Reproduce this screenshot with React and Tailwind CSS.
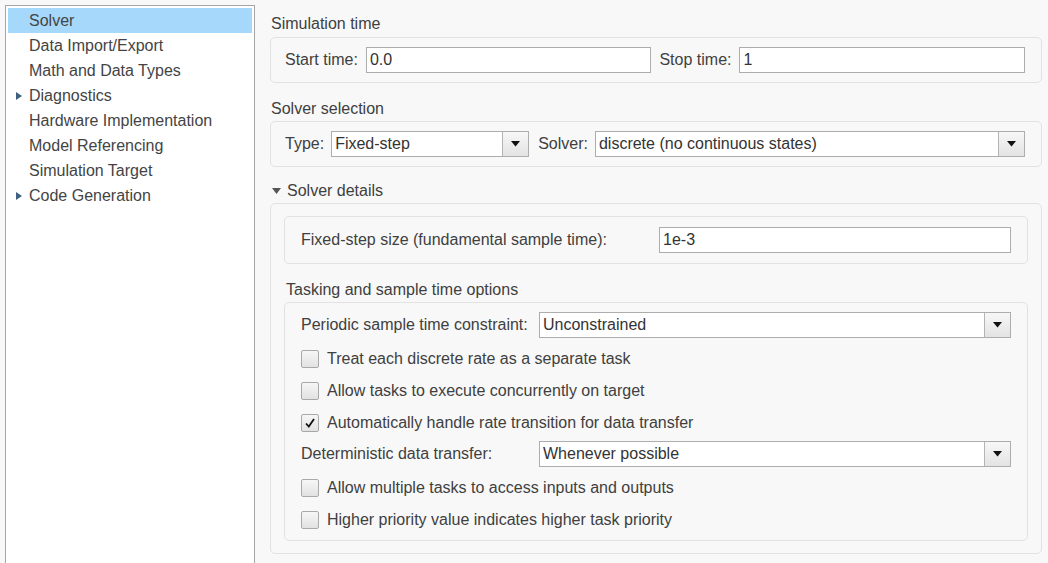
import React from "react";

const font = { fontFamily: '"Liberation Sans", Arial, sans-serif' };

function Tri({ className = "" }) {
  return (
    <svg width="7" height="10" viewBox="0 0 7 10" className={className}>
      <polygon points="0,1 6,5 0,9" fill="#40607f" />
    </svg>
  );
}

function Caret() {
  return (
    <svg width="9" height="6" viewBox="0 0 9 6">
      <polygon points="0,0 9,0 4.5,5.5" fill="#111" />
    </svg>
  );
}

function Select({ value, className = "" }) {
  return (
    <div className={`flex h-[26px] border border-[#adadad] bg-white ${className}`}>
      <div className="flex-1 flex items-center pl-[3px] text-[16px] text-[#333] leading-none">{value}</div>
      <div className="w-[26px] flex items-center justify-center border-l border-[#b4b4b4] bg-gradient-to-b from-[#f7f7f7] to-[#e3e3e3]">
        <Caret />
      </div>
    </div>
  );
}

function Input({ value, className = "" }) {
  return (
    <div className={`flex items-center h-[26px] border border-[#adadad] bg-white pl-[3px] text-[16px] text-[#333] leading-none ${className}`}>
      {value}
    </div>
  );
}

function Check({ label, checked, className = "" }) {
  return (
    <div className={`flex items-center h-[32px] gap-[8px] ${className}`}>
      <div className="w-[18px] h-[18px] border border-[#a9a9a9] rounded-[2px] bg-gradient-to-b from-[#f6f6f6] to-[#e2e2e2] flex items-center justify-center">
        {checked && (
          <svg width="12" height="12" viewBox="0 0 12 12">
            <path d="M2 6.5 L4.8 9.5 L10 2" stroke="#111" strokeWidth="1.8" fill="none" />
          </svg>
        )}
      </div>
      <span className="text-[16px] text-[#404040]">{label}</span>
    </div>
  );
}

const navItems = [
  { label: "Solver", selected: true },
  { label: "Data Import/Export" },
  { label: "Math and Data Types" },
  { label: "Diagnostics", arrow: true },
  { label: "Hardware Implementation" },
  { label: "Model Referencing" },
  { label: "Simulation Target" },
  { label: "Code Generation", arrow: true },
];

export default function App() {
  return (
    <div style={font} className="w-[1048px] h-[563px] overflow-hidden bg-[#f8f8f8] flex items-start text-[#404040]">
      <div className="mt-[5px] ml-[5px] w-[250px] h-[600px] shrink-0 border border-[#a5a5a5] bg-white p-[2px]">
        {navItems.map((it) => (
          <div
            key={it.label}
            className={`h-[25px] flex items-center text-[16px] pt-[1px] ${it.selected ? "bg-[#a6d8fb]" : ""}`}
          >
            <div className="w-[21px] flex justify-center pl-[1px]">{it.arrow && <Tri />}</div>
            <span className="text-[#444]">{it.label}</span>
          </div>
        ))}
      </div>

      <div className="ml-[15px] mt-[14px] w-[772px] shrink-0 text-[16px]">
        <div className="h-[20px] leading-[20px] pl-[1px]">Simulation time</div>
        <div className="mt-[3px] h-[46px] border border-[#e2e2e2] rounded-[5px] flex items-center gap-[8px] pl-[14px] pr-[16px]">
          <span>Start time:</span>
          <Input value="0.0" className="flex-1" />
          <span>Stop time:</span>
          <Input value="1" className="flex-1" />
        </div>

        <div className="mt-[16px] h-[20px] leading-[20px] pl-[1px]">Solver selection</div>
        <div className="mt-[2px] h-[46px] border border-[#e2e2e2] rounded-[5px] flex items-center pl-[14px] pr-[16px]">
          <span>Type:</span>
          <Select value="Fixed-step" className="ml-[7px] w-[198px]" />
          <span className="ml-[9px]">Solver:</span>
          <Select value="discrete (no continuous states)" className="ml-[7px] flex-1" />
        </div>

        <div className="mt-[14px] h-[20px] flex items-center gap-[6px] pl-[2px]">
          <svg width="9" height="7" viewBox="0 0 9 7">
            <polygon points="0,0 9,0 4.5,6" fill="#555" />
          </svg>
          <span>Solver details</span>
        </div>
        <div className="mt-[2px] border border-[#e2e2e2] rounded-[5px] px-[13px] pt-[12px] pb-[12px]">
          <div className="h-[48px] border border-[#e2e2e2] rounded-[5px] flex items-center pl-[16px] pr-[16px]">
            <span className="w-[358px]">Fixed-step size (fundamental sample time):</span>
            <Input value="1e-3" className="flex-1" />
          </div>
          <div className="mt-[16px] h-[20px] leading-[20px] pl-[2px]">Tasking and sample time options</div>
          <div className="mt-[2px] border border-[#e2e2e2] rounded-[5px] pl-[16px] pr-[16px] pt-[9px] pb-[4px]">
            <div className="flex items-center h-[26px]">
              <span className="w-[238px]">Periodic sample time constraint:</span>
              <Select value="Unconstrained" className="flex-1" />
            </div>
            <Check className="mt-[5px]" label="Treat each discrete rate as a separate task" />
            <Check label="Allow tasks to execute concurrently on target" />
            <Check checked label="Automatically handle rate transition for data transfer" />
            <div className="mt-[2px] flex items-center h-[26px]">
              <span className="w-[238px]">Deterministic data transfer:</span>
              <Select value="Whenever possible" className="flex-1" />
            </div>
            <Check className="mt-[5px]" label="Allow multiple tasks to access inputs and outputs" />
            <Check label="Higher priority value indicates higher task priority" />
          </div>
        </div>
      </div>
    </div>
  );
}
